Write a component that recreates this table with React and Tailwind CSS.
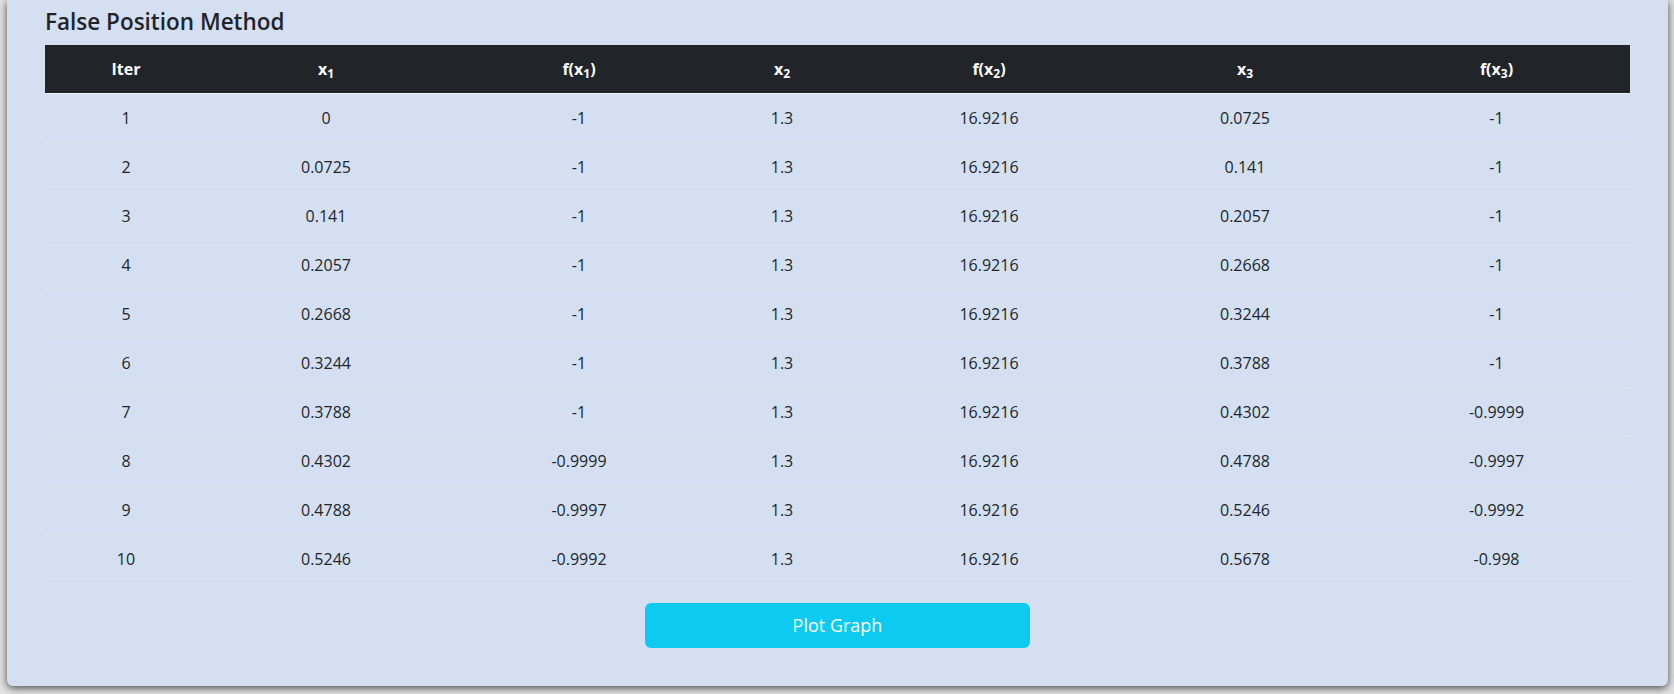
import React from "react";

const rows = [
  [1, "0", "-1", "1.3", "16.9216", "0.0725", "-1"],
  [2, "0.0725", "-1", "1.3", "16.9216", "0.141", "-1"],
  [3, "0.141", "-1", "1.3", "16.9216", "0.2057", "-1"],
  [4, "0.2057", "-1", "1.3", "16.9216", "0.2668", "-1"],
  [5, "0.2668", "-1", "1.3", "16.9216", "0.3244", "-1"],
  [6, "0.3244", "-1", "1.3", "16.9216", "0.3788", "-1"],
  [7, "0.3788", "-1", "1.3", "16.9216", "0.4302", "-0.9999"],
  [8, "0.4302", "-0.9999", "1.3", "16.9216", "0.4788", "-0.9997"],
  [9, "0.4788", "-0.9997", "1.3", "16.9216", "0.5246", "-0.9992"],
  [10, "0.5246", "-0.9992", "1.3", "16.9216", "0.5678", "-0.998"],
];

const widths = ["w-[162px]", "w-[238px]", "w-[268px]", "w-[138px]", "w-[276px]", "w-[236px]", "w-[267px]"];

export default function App() {
  return (
    <div className="min-h-screen bg-[#e4e4e4] font-['Open_Sans',sans-serif] text-[#212529]">
      <div className="ml-[7px] mr-[6px] rounded-b-md bg-[#d4e0f2] px-[38px] pt-[7px] pb-[38px] shadow-[0_2px_9px_rgba(0,0,0,0.7)]">
        {/* Title */}
        <h4 className="mb-[9px] text-[22.5px] font-semibold leading-[29px]">False Position Method</h4>

        {/* Result table */}
        <table className="w-full table-fixed border-collapse text-center text-[16px] leading-6">
          <colgroup>
            {widths.map((w, i) => (
              <col key={i} className={w} />
            ))}
          </colgroup>
          <thead>
            <tr className="border-b border-[#eef0f2] bg-[#212529] text-white">
              <th className="h-12 font-bold">Iter</th>
              <th className="h-12 font-bold">
                x<sub>1</sub>
              </th>
              <th className="h-12 font-bold">
                f(x<sub>1</sub>)
              </th>
              <th className="h-12 font-bold">
                x<sub>2</sub>
              </th>
              <th className="h-12 font-bold">
                f(x<sub>2</sub>)
              </th>
              <th className="h-12 font-bold">
                x<sub>3</sub>
              </th>
              <th className="h-12 font-bold">
                f(x<sub>3</sub>)
              </th>
            </tr>
          </thead>
          <tbody>
            {rows.map((r) => (
              <tr key={r[0]} className="border-b border-[#dee4ec]">
                {r.map((c, i) => (
                  <td key={i} className="h-[49px] align-middle">
                    {c}
                  </td>
                ))}
              </tr>
            ))}
          </tbody>
        </table>

        <div className="mt-[19px] flex justify-center">
          <button className="h-[45px] w-[385px] rounded-md bg-[#0dcaf0] text-[18px] text-white">Plot Graph</button>
        </div>
      </div>
    </div>
  );
}
